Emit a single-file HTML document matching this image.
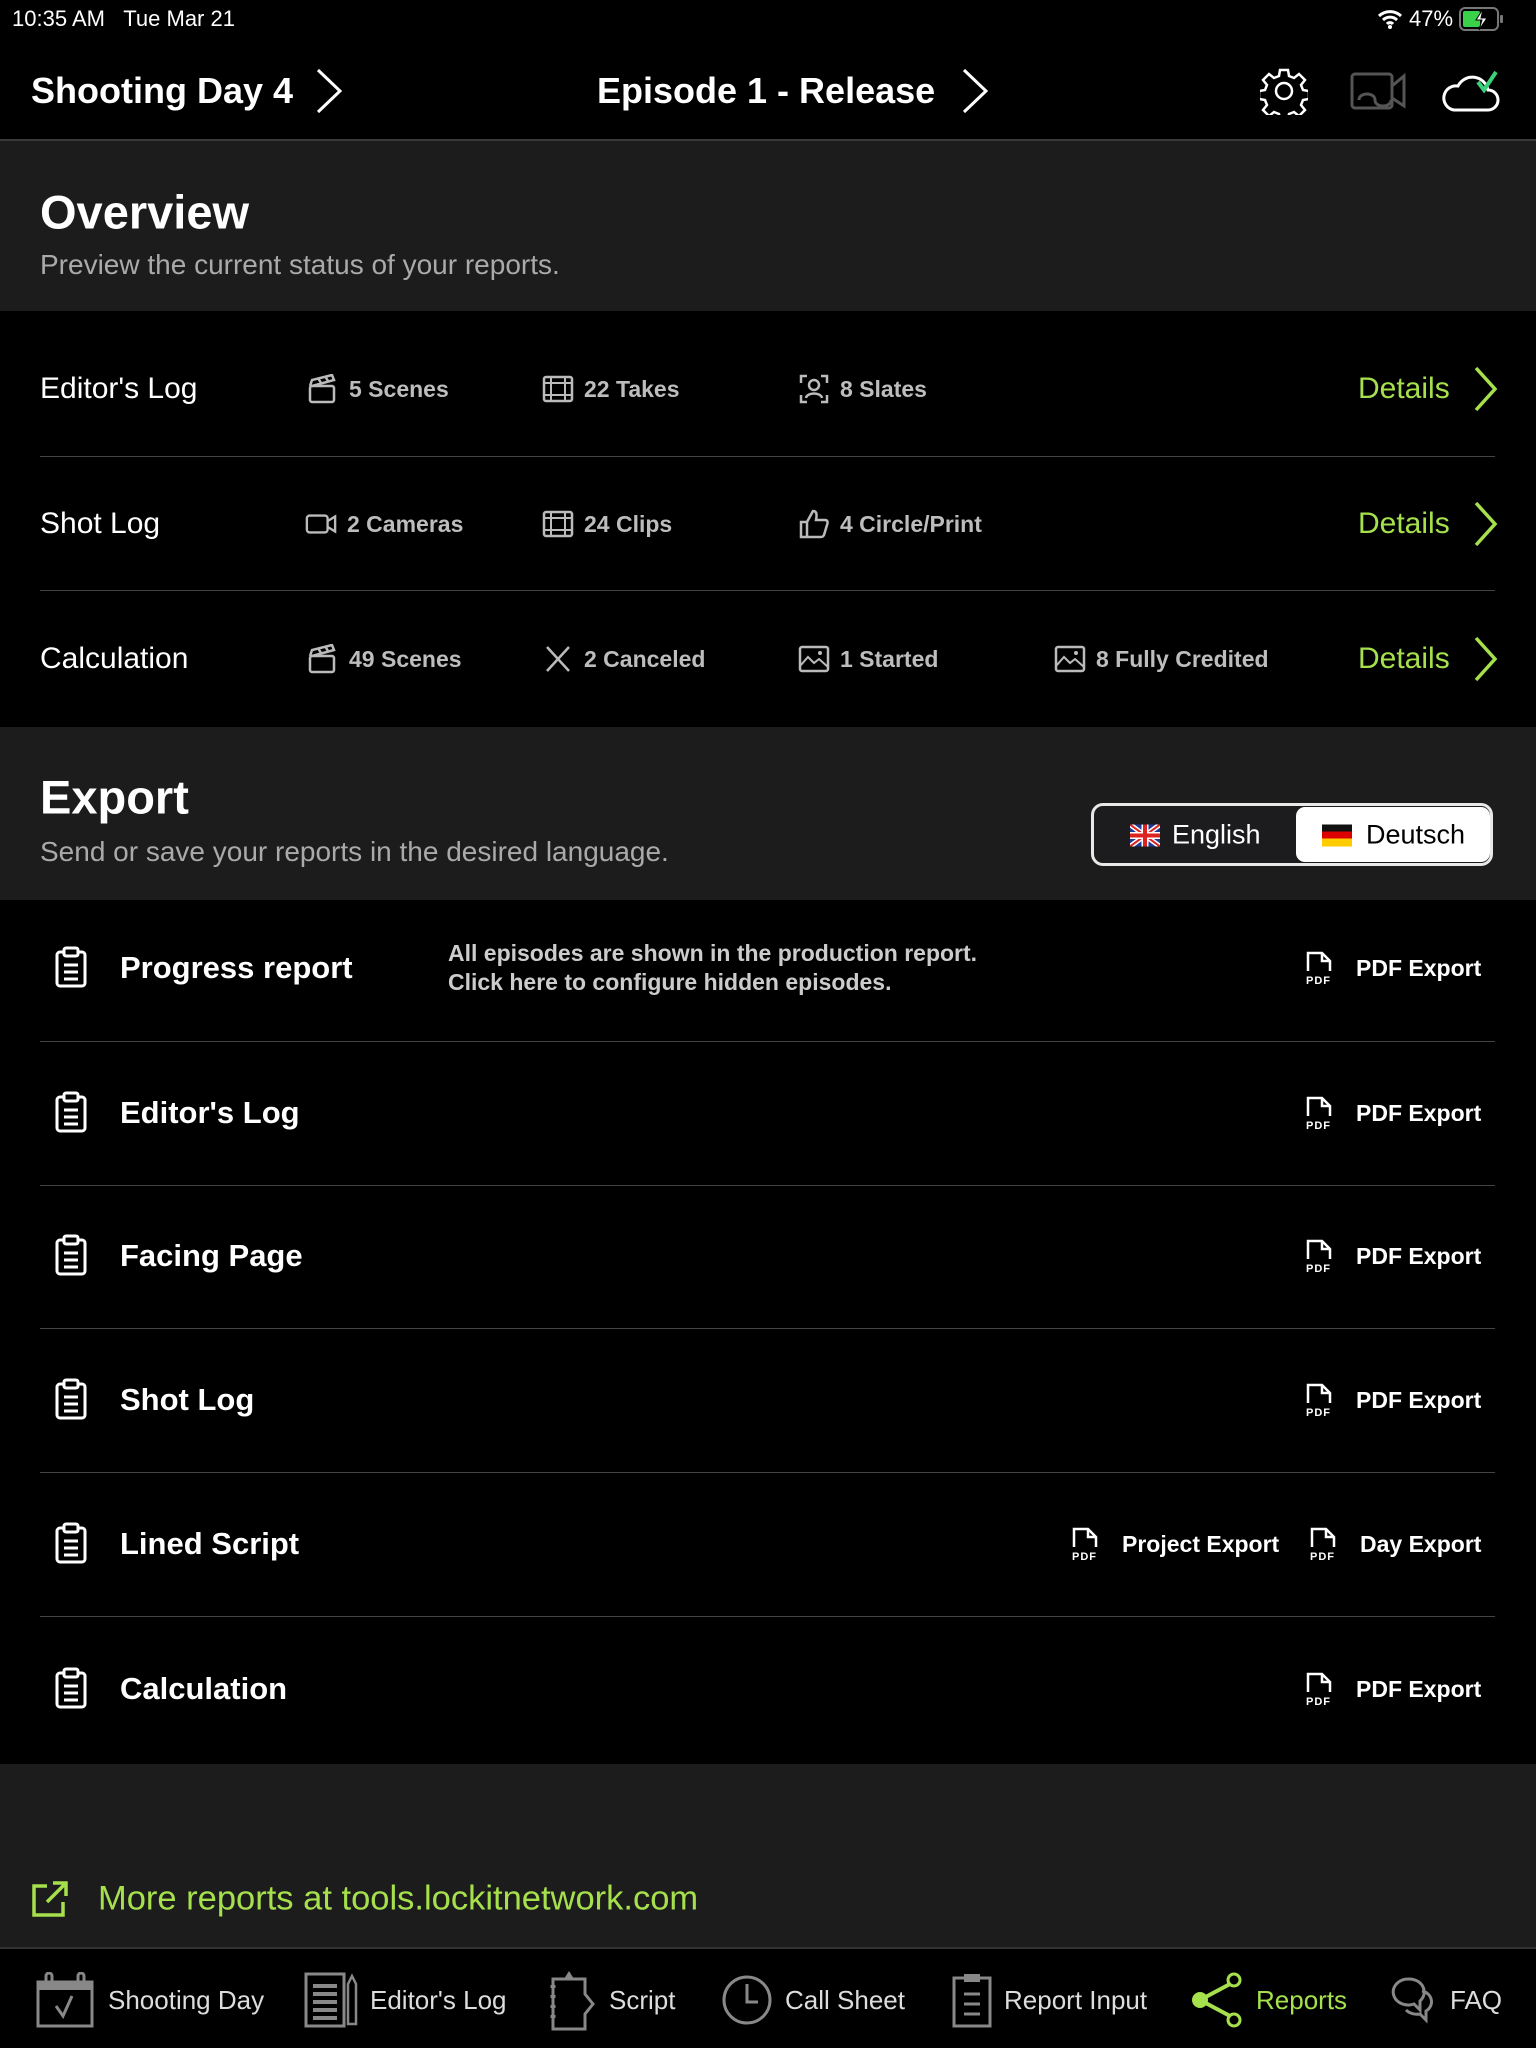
<!DOCTYPE html>
<html><head><meta charset="utf-8">
<style>
*{margin:0;padding:0;box-sizing:border-box}
body{width:1536px;height:2048px;background:#000;color:#fff;font-family:"Liberation Sans",sans-serif;position:relative;overflow:hidden}
.a{position:absolute;white-space:nowrap}
.vc{transform:translateY(-50%)}
.sep{position:absolute;left:40px;right:41px;height:1px;background:#444}
.stat{position:absolute;transform:translateY(-50%);font-size:23px;font-weight:bold;color:#bdbdbd;display:flex;align-items:center;gap:10px}
.stat svg{width:32px;height:30px}
.lbl{font-size:30px;color:#fff}
.det{font-size:30px;color:#a6e04c}
.erow{font-size:31px;font-weight:bold}
.pdf{position:absolute;transform:translateY(-50%);display:flex;align-items:center;gap:18px;font-size:23px;font-weight:bold}
.tab{position:absolute;top:2000px;transform:translateY(-50%);font-size:26px;color:#ddd;display:flex;align-items:center;gap:12px}
</style></head><body>
<div class="a" style="left:12px;top:6px;font-size:22px">10:35 AM&nbsp;&nbsp;&nbsp;Tue Mar 21</div>
<div class="a" style="left:1377px;top:6px;font-size:22px;display:flex;align-items:center;gap:6px">
<svg width="26" height="22" viewBox="0 0 26 22"><path d="M2 8a16 16 0 0 1 22 0M6 12a10 10 0 0 1 14 0M10 16a4 4 0 0 1 6 0" stroke="#fff" stroke-width="3" fill="none"/><circle cx="13" cy="19" r="2" fill="#fff"/></svg>
<span>47%</span>
<svg width="46" height="24" viewBox="0 0 46 24"><rect x="1" y="1" width="38" height="22" rx="5" fill="none" stroke="#777" stroke-width="2"/><rect x="4" y="4" width="17" height="16" rx="2" fill="#3ad14a"/><rect x="41" y="8" width="3" height="8" rx="1" fill="#777"/><path d="M24 2l-7 11h6l-3 10 8-12h-6z" fill="#fff" stroke="#000" stroke-width="1"/></svg>
</div>
<div class="a vc" style="left:31px;top:91px;font-size:36px;font-weight:bold">Shooting Day 4</div>
<svg class="a" style="left:314px;top:68px" width="30" height="46" viewBox="0 0 30 46"><path d="M4 2l22 21L4 44" stroke="#fff" stroke-width="3" fill="none"/></svg>
<div class="a vc" style="left:597px;top:91px;font-size:36px;font-weight:bold">Episode 1 - Release</div>
<svg class="a" style="left:960px;top:68px" width="30" height="46" viewBox="0 0 30 46"><path d="M4 2l22 21L4 44" stroke="#fff" stroke-width="3" fill="none"/></svg>
<svg class="a" style="left:1260px;top:67px" width="48" height="48" viewBox="0 0 48 48"><path d="M20 3h8l1 6 5 2 5-4 6 6-4 5 2 5 6 1v8l-6 1-2 5 4 5-6 6-5-4-5 2-1 6h-8l-1-6-5-2-5 4-6-6 4-5-2-5-6-1v-8l6-1 2-5-4-5 6-6 5 4 5-2z" fill="none" stroke="#fff" stroke-width="2.5"/><circle cx="24" cy="24" r="8" fill="none" stroke="#fff" stroke-width="2.5"/></svg>
<svg class="a" style="left:1349px;top:70px" width="58" height="46" viewBox="0 0 58 46"><rect x="3" y="4" width="40" height="34" rx="3" fill="none" stroke="#555" stroke-width="3"/><path d="M43 16l12-10v30l-12-8" fill="none" stroke="#555" stroke-width="3"/><path d="M10 30c0-8 16-8 16 0s16 8 16 0" fill="none" stroke="#555" stroke-width="3"/></svg>
<svg class="a" style="left:1442px;top:68px" width="58" height="46" viewBox="0 0 58 46"><path d="M12 42h34a10 10 0 0 0 0-20 16 16 0 0 0-30-4 12 12 0 0 0-4 24z" fill="none" stroke="#fff" stroke-width="3"/><path d="M36 14l6 8 12-18" fill="none" stroke="#3ad17a" stroke-width="4"/></svg>
<div class="a" style="left:0;top:139px;width:1536px;height:2px;background:#3a3a3a"></div>
<div class="a" style="left:0;top:141px;width:1536px;height:170px;background:#1c1c1c"></div>
<div class="a vc" style="left:40px;top:212px;font-size:47px;font-weight:bold">Overview</div>
<div class="a vc" style="left:40px;top:265px;font-size:28px;color:#aaa">Preview the current status of your reports.</div>

<div class="a vc lbl" style="left:40px;top:389px">Editor's Log</div>
<div class="a vc lbl" style="left:40px;top:524px">Shot Log</div>
<div class="a vc lbl" style="left:40px;top:659px">Calculation</div>
<div class="sep" style="top:456px"></div>
<div class="sep" style="top:590px"></div>

<div class="stat" style="left:307px;top:389px"><svg viewBox="0 0 32 30"><rect x="3" y="12" width="24" height="16" rx="2" fill="none" stroke="#bbb" stroke-width="2.5"/><path d="M3 12l2-6 20-5 2 5-22 6M11 4l3 5M18 2l3 5" fill="none" stroke="#bbb" stroke-width="2.5"/></svg>5 Scenes</div>
<div class="stat" style="left:542px;top:389px"><svg viewBox="0 0 32 30"><rect x="2" y="3" width="28" height="24" rx="2" fill="none" stroke="#bbb" stroke-width="2.5"/><path d="M9 3v24M23 3v24M2 9h28M2 21h28" stroke="#bbb" stroke-width="2"/></svg>22 Takes</div>
<div class="stat" style="left:798px;top:389px"><svg viewBox="0 0 32 30"><path d="M3 9V2h6M23 2h6v7M29 21v7h-6M9 28H3v-7" fill="none" stroke="#bbb" stroke-width="2.5"/><circle cx="16" cy="11" r="5" fill="none" stroke="#bbb" stroke-width="2.5"/><path d="M8 24c1-6 15-6 16 0" fill="none" stroke="#bbb" stroke-width="2.5"/></svg>8 Slates</div>

<div class="stat" style="left:305px;top:524px"><svg viewBox="0 0 34 30"><rect x="2" y="6" width="22" height="18" rx="3" fill="none" stroke="#bbb" stroke-width="2.5"/><path d="M24 12l8-5v16l-8-5" fill="none" stroke="#bbb" stroke-width="2.5"/></svg>2 Cameras</div>
<div class="stat" style="left:542px;top:524px"><svg viewBox="0 0 32 30"><rect x="2" y="3" width="28" height="24" rx="2" fill="none" stroke="#bbb" stroke-width="2.5"/><path d="M9 3v24M23 3v24M2 9h28M2 21h28" stroke="#bbb" stroke-width="2"/></svg>24 Clips</div>
<div class="stat" style="left:798px;top:524px"><svg viewBox="0 0 32 30"><path d="M3 13h6v15H3zM9 13l6-11c4 0 4 4 3 9h9c3 0 3 3 2 5l-3 10c-1 2-2 2-4 2H9" fill="none" stroke="#bbb" stroke-width="2.5"/></svg>4 Circle/Print</div>

<div class="stat" style="left:307px;top:659px"><svg viewBox="0 0 32 30"><rect x="3" y="12" width="24" height="16" rx="2" fill="none" stroke="#bbb" stroke-width="2.5"/><path d="M3 12l2-6 20-5 2 5-22 6M11 4l3 5M18 2l3 5" fill="none" stroke="#bbb" stroke-width="2.5"/></svg>49 Scenes</div>
<div class="stat" style="left:542px;top:659px"><svg viewBox="0 0 32 30"><path d="M5 3l22 24M27 3L5 27" stroke="#bbb" stroke-width="2.5"/></svg>2 Canceled</div>
<div class="stat" style="left:798px;top:659px"><svg viewBox="0 0 32 30"><rect x="2" y="3" width="28" height="24" rx="2" fill="none" stroke="#bbb" stroke-width="2.5"/><path d="M2 22l8-9 6 6 5-4 9 8" fill="none" stroke="#bbb" stroke-width="2"/><circle cx="22" cy="9" r="2" fill="#bbb"/></svg>1 Started</div>
<div class="stat" style="left:1054px;top:659px"><svg viewBox="0 0 32 30"><rect x="2" y="3" width="28" height="24" rx="2" fill="none" stroke="#bbb" stroke-width="2.5"/><path d="M2 22l8-9 6 6 5-4 9 8" fill="none" stroke="#bbb" stroke-width="2"/><circle cx="22" cy="9" r="2" fill="#bbb"/></svg>8 Fully Credited</div>

<div class="a vc det" style="left:1358px;top:389px">Details</div>
<div class="a vc det" style="left:1358px;top:524px">Details</div>
<div class="a vc det" style="left:1358px;top:659px">Details</div>
<svg class="a" style="left:1473px;top:366px" width="26" height="46" viewBox="0 0 26 46"><path d="M3 2l19 21L3 44" stroke="#a6e04c" stroke-width="3.5" fill="none"/></svg>
<svg class="a" style="left:1473px;top:501px" width="26" height="46" viewBox="0 0 26 46"><path d="M3 2l19 21L3 44" stroke="#a6e04c" stroke-width="3.5" fill="none"/></svg>
<svg class="a" style="left:1473px;top:636px" width="26" height="46" viewBox="0 0 26 46"><path d="M3 2l19 21L3 44" stroke="#a6e04c" stroke-width="3.5" fill="none"/></svg>

<div class="a" style="left:0;top:727px;width:1536px;height:173px;background:#1c1c1c"></div>
<div class="a vc" style="left:40px;top:797px;font-size:47px;font-weight:bold">Export</div>
<div class="a vc" style="left:40px;top:852px;font-size:28px;color:#aaa">Send or save your reports in the desired language.</div>
<div class="a" style="left:1091px;top:803px;width:402px;height:63px;border:3px solid #e8e8e8;border-radius:12px;background:#1c1c1e">
 <div class="a" style="left:202px;top:1px;width:194px;height:55px;background:#fff;border-radius:9px"></div>
 <div class="a vc" style="left:36px;top:29px;font-size:27px;display:flex;align-items:center;gap:12px">
  <svg width="30" height="22" viewBox="0 0 30 22"><rect width="30" height="22" fill="#1f3a93"/><path d="M0 0l30 22M30 0L0 22" stroke="#fff" stroke-width="5"/><path d="M0 0l30 22M30 0L0 22" stroke="#d22" stroke-width="2"/><path d="M15 0v22M0 11h30" stroke="#fff" stroke-width="7"/><path d="M15 0v22M0 11h30" stroke="#d22" stroke-width="4"/></svg>English</div>
 <div class="a vc" style="left:228px;top:29px;font-size:27px;color:#000;display:flex;align-items:center;gap:14px">
  <svg width="30" height="22" viewBox="0 0 30 22"><rect width="30" height="8" fill="#111"/><rect y="7" width="30" height="8" fill="#d00"/><rect y="14" width="30" height="8" fill="#fc0"/></svg>Deutsch</div>
</div>

<div class="sep" style="top:1041px"></div>
<div class="sep" style="top:1185px"></div>
<div class="sep" style="top:1328px"></div>
<div class="sep" style="top:1472px"></div>
<div class="sep" style="top:1616px"></div>

<svg width="0" height="0" style="position:absolute"><defs>
<g id="clip"><rect x="3" y="6" width="28" height="34" rx="3" fill="none" stroke="#fff" stroke-width="3"/><rect x="10" y="2" width="14" height="8" rx="2" fill="#000" stroke="#fff" stroke-width="3"/><path d="M10 19h14M10 26h14M10 33h14" stroke="#fff" stroke-width="3"/></g>
<g id="pdf"><path d="M2 20V2h14l8 8v10M16 2v8h8" fill="none" stroke="#fff" stroke-width="2.5"/><text x="0" y="33" font-family="Liberation Sans" font-weight="bold" font-size="11" fill="#fff" letter-spacing="1">PDF</text></g>
</defs></svg>

<svg class="a" style="left:54px;top:946px" width="36" height="44"><use href="#clip"/></svg>
<svg class="a" style="left:54px;top:1091px" width="36" height="44"><use href="#clip"/></svg>
<svg class="a" style="left:54px;top:1234px" width="36" height="44"><use href="#clip"/></svg>
<svg class="a" style="left:54px;top:1378px" width="36" height="44"><use href="#clip"/></svg>
<svg class="a" style="left:54px;top:1522px" width="36" height="44"><use href="#clip"/></svg>
<svg class="a" style="left:54px;top:1667px" width="36" height="44"><use href="#clip"/></svg>

<div class="a vc erow" style="left:120px;top:968px">Progress report</div>
<div class="a vc erow" style="left:120px;top:1113px">Editor's Log</div>
<div class="a vc erow" style="left:120px;top:1256px">Facing Page</div>
<div class="a vc erow" style="left:120px;top:1400px">Shot Log</div>
<div class="a vc erow" style="left:120px;top:1544px">Lined Script</div>
<div class="a vc erow" style="left:120px;top:1689px">Calculation</div>

<div class="a vc" style="left:448px;top:968px;font-size:23px;font-weight:bold;color:#ccc;line-height:29px">All episodes are shown in the production report.<br>Click here to configure hidden episodes.</div>

<div class="pdf" style="left:1306px;top:968px"><svg width="32" height="34"><use href="#pdf"/></svg>PDF Export</div>
<div class="pdf" style="left:1306px;top:1113px"><svg width="32" height="34"><use href="#pdf"/></svg>PDF Export</div>
<div class="pdf" style="left:1306px;top:1256px"><svg width="32" height="34"><use href="#pdf"/></svg>PDF Export</div>
<div class="pdf" style="left:1306px;top:1400px"><svg width="32" height="34"><use href="#pdf"/></svg>PDF Export</div>
<div class="pdf" style="left:1072px;top:1544px"><svg width="32" height="34"><use href="#pdf"/></svg>Project Export</div>
<div class="pdf" style="left:1310px;top:1544px"><svg width="32" height="34"><use href="#pdf"/></svg>Day Export</div>
<div class="pdf" style="left:1306px;top:1689px"><svg width="32" height="34"><use href="#pdf"/></svg>PDF Export</div>

<div class="a" style="left:0;top:1764px;width:1536px;height:184px;background:#1c1c1c"></div>
<svg class="a" style="left:31px;top:1880px" width="38" height="38" viewBox="0 0 38 38"><path d="M16 6H3v29h29V22M22 3h13v13M35 3L16 22" fill="none" stroke="#a6e04c" stroke-width="3.5"/></svg>
<div class="a vc" style="left:98px;top:1899px;font-size:34.5px;color:#a6e04c">More reports at tools.lockitnetwork.com</div>
<div class="a" style="left:0;top:1947px;width:1536px;height:2px;background:#333"></div>

<div class="tab" style="left:36px"><svg width="60" height="56" viewBox="0 0 60 56"><rect x="2" y="10" width="54" height="44" fill="none" stroke="#888" stroke-width="3"/><rect x="2" y="10" width="54" height="8" fill="#888"/><path d="M10 14V4a3 3 0 0 1 6 0v10M42 14V4a3 3 0 0 1 6 0v10" fill="none" stroke="#888" stroke-width="3"/><path d="M20 34l7 10 9-20" fill="none" stroke="#888" stroke-width="3"/></svg>Shooting Day</div>
<div class="tab" style="left:304px"><svg width="54" height="56" viewBox="0 0 54 56"><rect x="2" y="2" width="38" height="52" fill="none" stroke="#888" stroke-width="3"/><path d="M9 14h24M9 22h24M9 30h24M9 38h24M9 46h24" stroke="#888" stroke-width="4"/><path d="M44 12l4-8 4 8v40h-8z" fill="none" stroke="#888" stroke-width="2.5"/></svg>Editor's Log</div>
<div class="tab" style="left:549px"><svg width="48" height="62" viewBox="0 0 48 62"><path d="M4 10h32v15l8 10-8 10v15H4z" fill="none" stroke="#888" stroke-width="3"/><path d="M20 2l5 8h-10z" fill="#888"/><path d="M4 16v40" stroke="#888" stroke-width="5" stroke-dasharray="3 7"/></svg>Script</div>
<div class="tab" style="left:721px"><svg width="52" height="52" viewBox="0 0 52 52"><circle cx="26" cy="26" r="23" fill="none" stroke="#888" stroke-width="3"/><path d="M26 10v18h11" fill="none" stroke="#888" stroke-width="3"/></svg>Call Sheet</div>
<div class="tab" style="left:952px"><svg width="40" height="56" viewBox="0 0 40 56"><rect x="2" y="6" width="36" height="48" fill="none" stroke="#888" stroke-width="3"/><rect x="12" y="2" width="16" height="8" fill="#888"/><path d="M12 22h16M12 32h16M12 42h16" stroke="#888" stroke-width="3"/></svg>Report Input</div>
<div class="tab" style="left:1190px;color:#a6e04c"><svg width="54" height="56" viewBox="0 0 54 56"><circle cx="44" cy="8" r="6" fill="none" stroke="#a6e04c" stroke-width="3"/><circle cx="44" cy="48" r="6" fill="none" stroke="#a6e04c" stroke-width="3"/><circle cx="10" cy="28" r="8" fill="#a6e04c"/><path d="M10 28L40 12M10 28l30 16" stroke="#a6e04c" stroke-width="4"/></svg>Reports</div>
<div class="tab" style="left:1388px"><svg width="50" height="50" viewBox="0 0 50 50"><path d="M20 4a15 13 0 1 0 6 25l6 6v-9a15 13 0 0 0-12-22z" fill="none" stroke="#888" stroke-width="3"/><path d="M34 16a12 11 0 0 1 4 20v9l-6-6a14 11 0 0 1-14-4" fill="none" stroke="#888" stroke-width="3"/></svg>FAQ</div>
</body></html>
